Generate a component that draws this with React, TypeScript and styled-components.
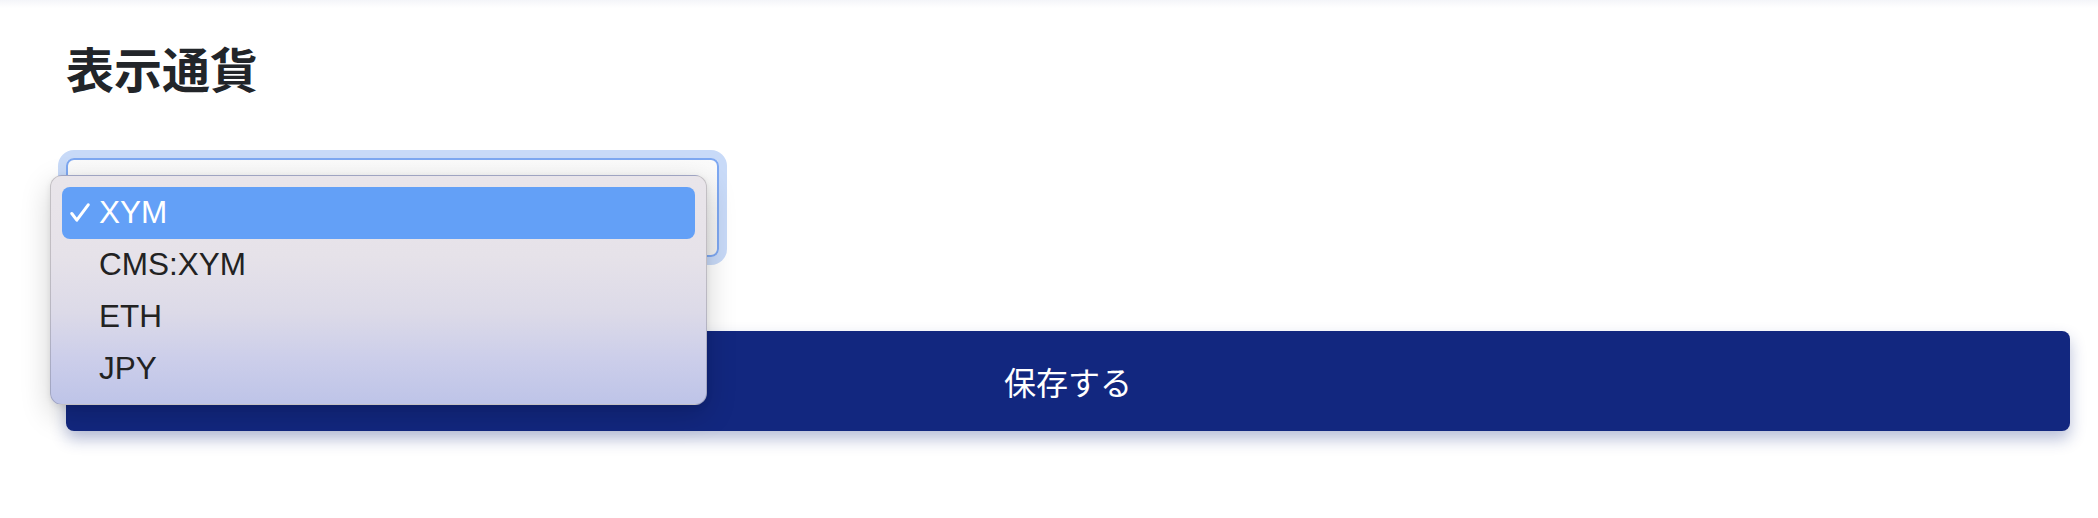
import React, { useState } from "react";
import styled, { createGlobalStyle } from "styled-components";

const GlobalStyle = createGlobalStyle`
  html, body {
    margin: 0;
    padding: 0;
    background: #ffffff;
  }
  body {
    font-family: "Noto Sans CJK JP", "Liberation Sans", sans-serif;
    color: #212529;
  }
`;

const TopShade = styled.div`
  height: 8px;
  background: linear-gradient(180deg, #f4f5f9 0%, #ffffff 100%);
`;

const Page = styled.div`
  padding: 0 28px 80px 66px;
`;

const Title = styled.h2`
  margin: 31px 0 0;
  font-family: "Noto Sans CJK JP", sans-serif;
  font-size: 48px;
  line-height: 1.2;
  font-weight: 700;
  color: #222529;
`;

const Field = styled.div`
  position: relative;
  width: 653px;
  margin-top: 61px;
`;

const SelectBox = styled.div`
  box-sizing: border-box;
  height: 99px;
  border: 2px solid #7ea8f1;
  border-radius: 8px;
  background: linear-gradient(180deg, #fbfbfb 0%, #f1f1f1 100%);
  box-shadow: 0 0 0 8px #c8daf8;
`;

const Menu = styled.ul`
  position: absolute;
  left: -16px;
  top: 17px;
  box-sizing: border-box;
  width: 657px;
  margin: 0;
  padding: 11px 11px 9px;
  list-style: none;
  border: 1px solid rgba(0, 0, 0, 0.16);
  border-radius: 12px;
  background: linear-gradient(180deg, #e9e5ea 0%, #e6e2e9 35%, #dcdae8 60%, #ccceea 80%, #bec4e8 100%);
  box-shadow: 0 10px 30px rgba(0, 0, 0, 0.18), 0 2px 6px rgba(0, 0, 0, 0.08);
  z-index: 2;
`;

const Option = styled.li<{ selected: boolean }>`
  display: flex;
  align-items: center;
  height: 52px;
  padding-left: 8px;
  border-radius: 8px;
  font-family: "Liberation Sans", Arial, sans-serif;
  font-size: 31.5px;
  color: ${({ selected }) => (selected ? "#ffffff" : "#222222")};
  background: ${({ selected }) => (selected ? "#63a0f7" : "transparent")};
`;

const Check = styled.span`
  display: inline-flex;
  width: 29px;
  align-items: center;
`;

const SaveButton = styled.button`
  display: flex;
  align-items: center;
  justify-content: center;
  width: 100%;
  height: 100px;
  margin-top: 74px;
  border: none;
  border-radius: 8px;
  background: #12277f;
  color: #ffffff;
  font-family: "Noto Sans CJK JP", sans-serif;
  font-size: 32px;
  box-shadow: 0 8px 16px rgba(18, 39, 127, 0.3);
  cursor: pointer;
`;

const currencies = ["XYM", "CMS:XYM", "ETH", "JPY"];

const CheckIcon = () => (
  <svg width="20" height="19" viewBox="0 0 20 19">
    <path d="M1.8 10.5 L6.8 17.2 L18.2 1.8" fill="none" stroke="#ffffff" strokeWidth="3" strokeLinecap="round" strokeLinejoin="round" />
  </svg>
);

export default function App() {
  const [currency, setCurrency] = useState("XYM");

  return (
    <>
      <GlobalStyle />
      <TopShade />
      <Page>
        <Title>表示通貨</Title>
        <Field>
          <SelectBox />
          <Menu>
            {currencies.map((item) => (
              <Option key={item} selected={item === currency} onClick={() => setCurrency(item)}>
                <Check>{item === currency && <CheckIcon />}</Check>
                {item}
              </Option>
            ))}
          </Menu>
        </Field>
        <SaveButton>保存する</SaveButton>
      </Page>
    </>
  );
}
